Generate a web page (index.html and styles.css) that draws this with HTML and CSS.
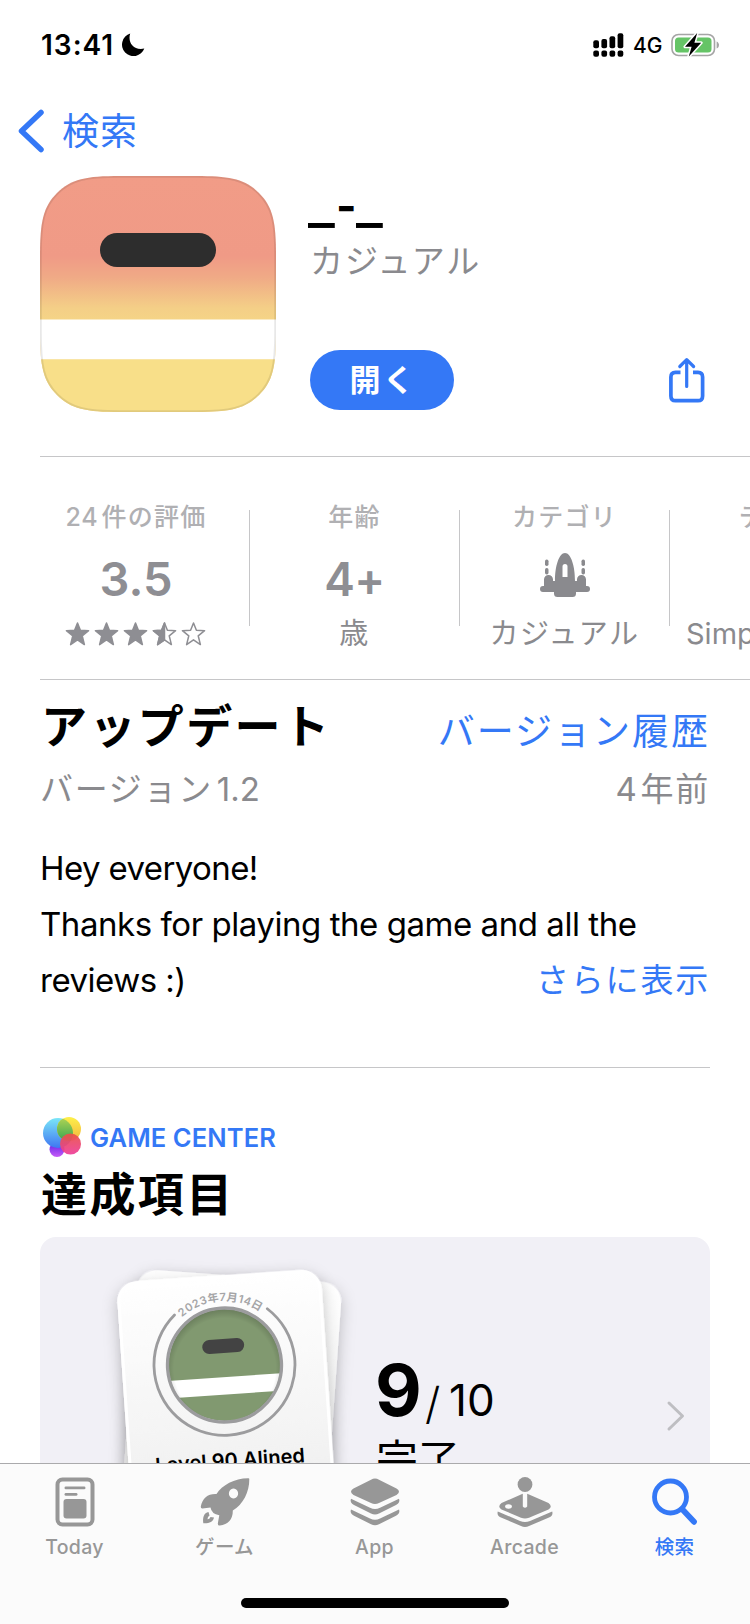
FILE: index.html
```html
<!DOCTYPE html>
<html lang="ja">
<head>
<meta charset="utf-8">
<title>App Store</title>
<link rel="stylesheet" href="styles.css">
</head>
<body>
<div class="screen">
  <main class="content">
    <header class="status">
      <span class="status-time">13:41</span>
      <svg class="moon" width="24" height="24" viewBox="0 0 24 24"><path d="M9.2.6C6.500 8.500 12 18 23.300 15.600A11.500 11.500 0 1 1 9.200.6Z"/></svg>
      <svg class="signal" width="31" height="24" viewBox="0 0 31 24"><rect x="0.300" y="7.200" width="5.700" height="8" rx="2"/><rect x="8.400" y="6" width="5.700" height="9.200" rx="2"/><rect x="16.500" y="3.300" width="5.700" height="11.900" rx="2"/><rect x="24.600" y="0.200" width="5.700" height="15" rx="2"/><rect x="0.300" y="17.500" width="5.700" height="6.200" rx="2"/><rect x="8.400" y="17.500" width="5.700" height="6.200" rx="2"/><rect x="16.500" y="17.500" width="5.700" height="6.200" rx="2"/><rect x="24.600" y="17.500" width="5.700" height="6.200" rx="2"/></svg>
      <span class="network">4G</span>
      <svg class="battery" width="49" height="24" viewBox="0 0 49 24"><rect x="1" y="1.500" width="42.500" height="21" rx="6.500" fill="none" stroke="#a5a5a5" stroke-width="1.600"/><path d="M45.600 8.500c3.200 1 3.200 6 0 7z" fill="#a5a5a5"/><rect x="4" y="4.500" width="36.500" height="15" rx="3.500" fill="#65c466"/><path d="M26.200 0 14 13.800h6.600L17.800 23.500 30.200 9.800h-6.800z" fill="#000" stroke="#fff" stroke-width="3" stroke-linejoin="round" paint-order="stroke"/></svg>
    </header>
    <nav class="nav">
      <svg width="27" height="44" viewBox="0 0 27 44" fill="none" stroke="#3478f6" stroke-width="5.500" stroke-linecap="round" stroke-linejoin="round"><path d="M23 3.500 3.500 22 23 40.500"/></svg>
      <a class="nav-back">検索</a>
    </nav>
    <section class="hero">
      <svg class="app-icon" width="236" height="236" viewBox="0 0 236 236">
        <defs>
          <linearGradient id="sky" x1="0" y1="0" x2="0" y2="1"><stop offset="0" stop-color="#f19c87"/><stop offset=".34" stop-color="#f09a86"/><stop offset=".43" stop-color="#f0aa86"/><stop offset=".56" stop-color="#f4cf87"/><stop offset=".61" stop-color="#f5d486"/></linearGradient>
          <clipPath id="squircle"><path d="M80 0H156C190 0 205 3 219 17S236 46 236 80V156C236 190 233 205 219 219S190 236 156 236H80C46 236 31 233 17 219S0 190 0 156V80C0 46 3 31 17 17S46 0 80 0Z"/></clipPath>
        </defs>
        <g clip-path="url(#squircle)">
          <rect width="236" height="236" fill="url(#sky)"/>
          <rect y="143.500" width="236" height="40" fill="#fff"/>
          <rect y="183.500" width="236" height="53" fill="#f8df89"/>
          <rect x="60" y="57" width="116" height="34" rx="17" fill="#2d2d2d"/>
          <path d="M80 0H156C190 0 205 3 219 17S236 46 236 80V156C236 190 233 205 219 219S190 236 156 236H80C46 236 31 233 17 219S0 190 0 156V80C0 46 3 31 17 17S46 0 80 0Z" fill="none" stroke="#000" stroke-opacity=".09" stroke-width="3.500"/>
        </g>
      </svg>
      <div class="hero-info">
        <h1 class="app-title"><span class="under">_</span><span class="dash">-</span><span class="under">_</span></h1>
        <p class="app-genre">カジュアル</p>
        <div class="hero-actions">
          <button class="open-button">開く</button>
          <svg class="share" width="38" height="47" viewBox="0 0 38 47" fill="none" stroke="#3478f6" stroke-width="3.700" stroke-linecap="round" stroke-linejoin="round"><path d="M12.500 15.300H7.500Q2.900 15.300 2.900 20V39Q2.900 43.700 7.500 43.700H30Q34.600 43.700 34.600 39V20Q34.600 15.300 30 15.300H25" stroke-linecap="butt"/><path d="M18.700 29.500V3M11.800 9.500l6.900-6.900 6.900 6.900" stroke-width="3.200"/></svg>
        </div>
      </div>
    </section>
    <section class="facts">
      <div class="fact">
        <span class="fact-label"><span class="count">24</span>件の評価</span>
        <span class="fact-value rating">3.5</span>
        <span class="fact-sub">
          <svg width="142" height="26" viewBox="0 0 142 26" fill="#8e8e93" stroke="#8e8e93" stroke-width="1.500" stroke-linejoin="round">
            <defs><path id="star" d="M12.500 2 15.400 9.300 23.600 9.700 17.200 14.800 19.400 23.600 12.500 18.800 5.600 23.600 7.800 14.800 1.400 9.700 9.600 9.300Z"/></defs>
            <use href="#star"/><use href="#star" x="29"/><use href="#star" x="58"/>
            <use href="#star" x="87" fill="none"/><path d="M99.500 2V18.800L92.600 23.600 94.800 14.800 88.400 9.700 96.600 9.300Z"/>
            <use href="#star" x="116" fill="none"/>
          </svg>
        </span>
      </div>
      <div class="fact">
        <span class="fact-label">年齢</span>
        <span class="fact-value age-value">4+</span>
        <span class="fact-sub">歳</span>
      </div>
      <div class="fact">
        <span class="fact-label category">カテゴリ</span>
        <span class="fact-value">
          <svg class="ship" width="50" height="44" viewBox="0 0 50 44" fill="#8a8a8e"><path fill-rule="evenodd" d="M25 0C19 0 15 13 15 28H13V26.500a3 3 0 0 0-9 0V33H3a3 3 0 0 0 0 6H14v1.500Q14 44 17.500 44H32.500Q36 44 36 40.500V39H47a3 3 0 0 0 0-6H46V26.500a3 3 0 0 0-9 0V28H35C35 13 31 0 25 0ZM25 11a2.500 2.500 0 0 1 2.500 2.500V24h-5V13.500A2.500 2.500 0 0 1 25 11Z"/><rect x="5" y="6.500" width="3.500" height="6.500" rx="1.700"/><rect x="5" y="15" width="3.500" height="6.500" rx="1.700"/><rect x="41.500" y="6.500" width="3.500" height="6.500" rx="1.700"/><rect x="41.500" y="15" width="3.500" height="6.500" rx="1.700"/></svg>
        </span>
        <span class="fact-sub genre">カジュアル</span>
      </div>
      <div class="fact developer">
        <span class="fact-label">デ</span>
        <span class="fact-value"></span>
        <span class="fact-sub">Simp</span>
      </div>
    </section>
    <section class="update">
      <div class="update-head">
        <h2 class="heading update-title">アップデート</h2>
        <a class="history">バージョン履歴</a>
      </div>
      <div class="update-meta"><span>バージョン<span class="num">1.2</span></span><span class="age"><span class="years">4</span>年前</span></div>
      <div class="notes">
        <p class="greeting">Hey everyone!</p>
        <p class="wide">Thanks for playing the game and all the</p>
        <div class="notes-last"><p>reviews :)</p><a class="more">さらに表示</a></div>
      </div>
    </section>
    <section class="gamecenter">
      <div class="gc-label">
        <svg width="40" height="42" viewBox="0 0 40 42">
          <defs>
            <linearGradient id="blue" x1="0" y1="0" x2="0" y2="1"><stop offset="0" stop-color="#7be6f7"/><stop offset="1" stop-color="#3f76f2"/></linearGradient>
            <linearGradient id="yellow" x1="0" y1="0" x2="0" y2="1"><stop offset="0" stop-color="#fdf04a"/><stop offset="1" stop-color="#f3b43e"/></linearGradient>
            <linearGradient id="green" x1="0" y1="0" x2="0" y2="1"><stop offset="0" stop-color="#b4d553"/><stop offset="1" stop-color="#38a552"/></linearGradient>
            <linearGradient id="pink" x1="0" y1="0" x2="0" y2="1"><stop offset="0" stop-color="#ea5245"/><stop offset="1" stop-color="#ee3f9b"/></linearGradient>
            <linearGradient id="violet" x1="0" y1="0" x2="0" y2="1"><stop offset="0" stop-color="#5a20e6"/><stop offset="1" stop-color="#c65bf7"/></linearGradient>
            <clipPath id="blueclip"><circle cx="16" cy="17" r="15"/></clipPath>
          </defs>
          <circle cx="15" cy="33.500" r="7.500" fill="url(#violet)"/>
          <circle cx="16" cy="17" r="15" fill="url(#blue)"/>
          <circle cx="27" cy="13" r="12" fill="url(#yellow)"/>
          <circle cx="27" cy="13" r="12" fill="url(#green)" clip-path="url(#blueclip)"/>
          <circle cx="28.500" cy="28" r="10.500" fill="url(#pink)" fill-opacity=".93"/>
        </svg>
        <span>GAME CENTER</span>
      </div>
      <h2 class="heading achievements-title">達成項目</h2>
      <div class="achievements">
        <svg class="stack" width="338" height="226" viewBox="40 1237 338 226">
          <defs>
            <linearGradient id="paper" x1="0" y1="0" x2="0" y2="1"><stop offset="0" stop-color="#fff"/><stop offset="1" stop-color="#ececec"/></linearGradient>
            <filter id="shadow" x="-20%" y="-20%" width="140%" height="140%"><feDropShadow dx="0" dy="5" stdDeviation="8" flood-color="#000" flood-opacity=".24"/></filter>
            <clipPath id="badge"><circle cx="224.500" cy="1365" r="56"/></clipPath>
            <radialGradient id="rim"><stop offset=".82" stop-color="#000" stop-opacity="0"/><stop offset="1" stop-color="#000" stop-opacity=".22"/></radialGradient>
            <path id="arc" d="M160.500 1365A64 64 0 0 1 288.500 1365"/>
          </defs>
          <g transform="rotate(4 235 1400)"><rect x="129" y="1276" width="205" height="270" rx="20" fill="url(#paper)" filter="url(#shadow)"/></g>
          <g transform="rotate(-3.900 224.500 1365)">
            <rect x="122" y="1275.500" width="204.500" height="270" rx="20" fill="url(#paper)" filter="url(#shadow)"/>
            <rect x="123.500" y="1277" width="201.500" height="267" rx="18.500" fill="none" stroke="#fff" stroke-width="3"/>
            <g clip-path="url(#badge)">
              <rect x="165" y="1305" width="120" height="120" fill="#819970"/>
              <rect x="203.500" y="1339" width="42" height="14" rx="7" fill="#434343"/>
              <rect x="165" y="1377" width="120" height="17.500" fill="#fff"/>
              <circle cx="224.500" cy="1369" r="62" fill="url(#rim)"/>
            </g>
            <circle cx="224.500" cy="1365" r="57" fill="none" stroke="#9c9c9e" stroke-width="3.300"/>
            <path d="M178 1311.800A70.500 70.500 0 1 0 271 1311.800" fill="none" stroke="#9c9c9e" stroke-width="2.800" stroke-linecap="round"/>
            <text class="arc-date"><textPath href="#arc" startOffset="50%" text-anchor="middle">2023年7月14日</textPath></text>
            <text class="card-title" x="223.500" y="1467.500" text-anchor="middle" textLength="150">Level 90 Alined</text>
          </g>
        </svg>
        <div class="progress">
          <div class="score"><b>9</b><span class="slash">/</span><span class="total">10</span></div>
          <div class="done">完了</div>
        </div>
        <svg class="chevron" width="20" height="32" viewBox="0 0 20 32" fill="none" stroke="#bebec2" stroke-width="3" stroke-linecap="round" stroke-linejoin="round"><path d="M3 3 16.500 16 3 29"/></svg>
      </div>
    </section>
  </main>
  <footer class="tabbar">
    <div class="tabs">
      <div class="tab">
        <svg width="56" height="52" viewBox="0 0 56 52" fill="#979797"><rect x="10.500" y="3.500" width="35" height="45" rx="5" fill="none" stroke="#979797" stroke-width="4"/><rect x="17.500" y="10.500" width="21" height="2.800" rx="1.400"/><rect x="17.500" y="17" width="13" height="2.800" rx="1.400"/><rect x="16.500" y="23" width="23" height="19.500" rx="3"/></svg>
        <span>Today</span>
      </div>
      <div class="tab">
        <svg width="56" height="52" viewBox="0 0 56 52" fill="#979797"><path fill-rule="evenodd" d="M51.500 2.200C38 2 25 9 19.500 18C11 17.500 5.500 22 3.800 30.500Q3.500 32.500 5.500 32.400L13.500 31.500Q14.500 38 22.300 39.300L20.800 47.500Q20.700 49.800 22.800 49.500C31 48.500 36 43.500 35.800 34.500C46 28.500 52.500 16 52.300 3Q52.300 2.200 51.500 2.200ZM36.500 12.500a4.600 5 0 1 0 .01 0Z"/><path d="M11.500 36C7 37 5.500 41 6.300 47.200C12 47.500 16 46 17 41.500L13.500 41Q12.500 43.500 10.500 43.300Q10.500 40.500 12.500 39.500Z"/></svg>
        <span>ゲーム</span>
      </div>
      <div class="tab">
        <svg width="56" height="52" viewBox="0 0 56 52" fill="#979797"><path d="M24 3.700Q28 1.200 32 3.700L49.500 12.500Q54.500 15.700 49.500 19L32 27Q28 29 24 27L6.500 19Q1.500 15.700 6.500 12.500Z"/><path d="M4 22.800 23 31.800Q28 34.300 33 31.800L52 22.800Q53.500 26.600 49 29L32 37.500Q28 39.500 24 37.500L7 29Q2.500 26.600 4 22.800Z"/><path d="M4 33.500 23 42.500Q28 45 33 42.500L52 33.500Q53.500 37.300 49 39.700L32 48.200Q28 50.200 24 48.200L7 39.700Q2.500 37.300 4 33.500Z"/></svg>
        <span>App</span>
      </div>
      <div class="tab">
        <svg width="56" height="52" viewBox="0 0 56 52" fill="#979797"><circle cx="28" cy="8.500" r="7.400"/><path fill-rule="evenodd" d="M24 18.500 25.800 17.800V30.500Q28 33 30.200 30.500V17.800L32 18.500 51.500 27Q56 30.500 51.500 33.500L32 41.800Q28 43.200 24 41.800L4.500 33.500Q0 30.500 4.500 27ZM11.500 28.200a3.400 2.300 0 1 0 .01 0Z"/><path d="M.8 35.500 23 45Q28 47 33 45L55.200 35.500Q56.500 39.500 52 41.500L32 50Q28 51.800 24 50L4 41.500Q-.5 39.500 .8 35.500Z"/></svg>
        <span>Arcade</span>
      </div>
      <div class="tab active">
        <svg width="56" height="52" viewBox="0 0 56 52" fill="none" stroke="#3478f6" stroke-linecap="round"><circle cx="23.500" cy="21" r="16" stroke-width="4.800"/><path d="M35.500 33.500 47 45.800" stroke-width="5.800"/></svg>
        <span>検索</span>
      </div>
    </div>
    <div class="home-indicator"></div>
  </footer>
</div>
</body>
</html>
```
FILE: styles.css
```css
* { box-sizing: border-box; }
body, h1, h2, p { margin: 0; }
body {
  background: #fff;
  color: #000;
  font-family: Inter, "Noto Sans CJK JP", sans-serif;
}
svg { display: block; flex: none; }
a { color: #3478f6; }
.screen { width: 750px; height: 1624px; overflow: hidden; display: flex; flex-direction: column; }
.content { height: 1463px; flex: none; overflow: hidden; }

.status { height: 90px; display: flex; align-items: center; padding: 0 30px 0 41px; }
.status-time { font-size: 28px; font-weight: 600; line-height: 34px; width: 80px; letter-spacing: 1px; white-space: nowrap; }
.signal { margin-left: auto; }
.network { font-size: 21px; font-weight: 500; line-height: 26px; margin: 0 9px; width: 29px; white-space: nowrap; padding-top: 1px; }

.nav { height: 82px; display: flex; align-items: center; padding-left: 18px; }
.nav-back { font-size: 37px; line-height: 50px; letter-spacing: 1px; margin: 1px 0 0 17px; }

.hero { margin: 4px 0 0 40px; padding: 0 44px 44px 0; display: flex; border-bottom: 1px solid #c6c6c8; }
.hero-info { flex: 1; padding-left: 34px; display: flex; flex-direction: column; }
.app-title { display: flex; font-size: 44px; line-height: 62px; font-weight: 700; height: 62px; margin-left: -2px; }
.under { width: 28px; transform: scaleX(1.28); transform-origin: left; }
.dash { width: 20px; margin-top: -1px; }
.app-genre { font-size: 33px; line-height: 44px; color: #8a8a8e; letter-spacing: 1.9px; margin-top: 1px; }
.hero-actions { margin-top: auto; padding-bottom: 2px; display: flex; justify-content: space-between; align-items: center; }
.open-button {
  width: 144px; height: 60px; padding: 0 0 0 2px; border: 0; border-radius: 30px;
  background: #3478f6; color: #fff; font: 600 31px/60px Inter, "Noto Sans CJK JP", sans-serif; letter-spacing: 2.5px;
}

.facts {
  margin-left: 40px; height: 223px; padding-top: 53px;
  display: grid; grid-template-columns: 210px 210px 210px 210px; grid-template-rows: 116px;
  border-bottom: 1px solid #c6c6c8; overflow: hidden;
}
.fact { display: flex; flex-direction: column; align-items: center; border-right: 1px solid #c6c6c8; white-space: nowrap; }
.fact > span { flex: none; }
.fact:first-child { padding-right: 17px; }
.fact-label { margin-top: -9px; height: 32px; font-size: 25px; line-height: 32px; font-weight: 500; color: #b0b0b3; letter-spacing: 1.3px; }
.count { letter-spacing: .8px; margin-right: 3px; }
.fact-value { margin-top: 16px; height: 60px; font-size: 47px; line-height: 60px; font-weight: 600; color: #8e8e93; display: flex; align-items: center; }
.age-value { font-size: 46px; letter-spacing: -.5px; }
.ship { margin-top: -9px; }
.fact-sub { margin-top: 7px; height: 36px; font-size: 29px; line-height: 36px; color: #8a8a8e; display: flex; align-items: center; letter-spacing: 1.6px; }
.developer { align-items: flex-start; padding-left: 16px; }
.developer .fact-label { margin-left: 53px; }
.developer .fact-sub { letter-spacing: 0; }

.update { margin: 0 40px; height: 388px; padding-top: 20px; border-bottom: 1px solid #c6c6c8; }
.update-head { display: flex; justify-content: space-between; height: 50px; }
.heading { font-size: 46px; line-height: 50px; font-weight: 700; letter-spacing: 2.4px; }
.update-title { padding: 1px 0 0 1px; }
.history { font-size: 37px; line-height: 50px; letter-spacing: 2px; padding-top: 7px; }
.update-meta { display: flex; justify-content: space-between; margin-top: 23px; font-size: 33px; line-height: 32px; color: #8a8a8e; letter-spacing: 1.7px; }
.num { letter-spacing: 0; margin-left: 4px; }
.years { margin-right: 2px; }
.notes { margin-top: 35px; font-size: 33px; line-height: 56px; letter-spacing: -.5px; }
.notes p { white-space: nowrap; }
.notes .greeting { letter-spacing: -.6px; }
.notes .wide { letter-spacing: -.45px; }
.notes-last { display: flex; justify-content: space-between; }
.more { letter-spacing: 1.8px; }

.gamecenter { margin: 0 40px; padding-top: 48px; }
.gc-label { display: flex; align-items: center; height: 42px; padding-left: 2px; gap: 8px; font-size: 25.5px; font-weight: 600; color: #3478f6; letter-spacing: .1px; }
.achievements-title { margin-top: 11px; padding-left: 1px; }
.achievements { margin-top: 18px; height: 300px; border-radius: 16px; background: #f1f0f6; display: flex; align-items: flex-start; }
.progress { padding-top: 117px; }
.score { display: flex; align-items: baseline; line-height: 72px; height: 72px; }
.score b { font-size: 72px; width: 50px; margin-left: -3px; }
.slash { font-size: 44px; width: 24px; font-weight: 300; padding-top: 4px; transform: translateY(3px); }
.total { font-size: 44px; }
.done { margin: 10px 0 0 -2px; font-size: 42px; line-height: 48px; }
.chevron { margin: 163px 24px 0 auto; }
.arc-date { font-size: 11px; font-weight: 600; fill: #a5a5a7; letter-spacing: .5px; }
.card-title { font-size: 20px; font-weight: 600; }

.tabbar { height: 161px; background: #fbfbfb; border-top: 1px solid #aaaaac; display: flex; flex-direction: column; align-items: center; }
.tabs { display: grid; grid-template-columns: repeat(5, 150px); padding-top: 12px; height: 134px; margin-left: -1px; }
.tab { display: flex; flex-direction: column; align-items: center; color: #979797; font-size: 19.5px; line-height: 26px; font-weight: 500; letter-spacing: .3px; }
.tab span { margin-top: 6px; }
.tab.active { color: #3478f6; }
.home-indicator { width: 268px; height: 10px; border-radius: 5px; background: #000; }
```
